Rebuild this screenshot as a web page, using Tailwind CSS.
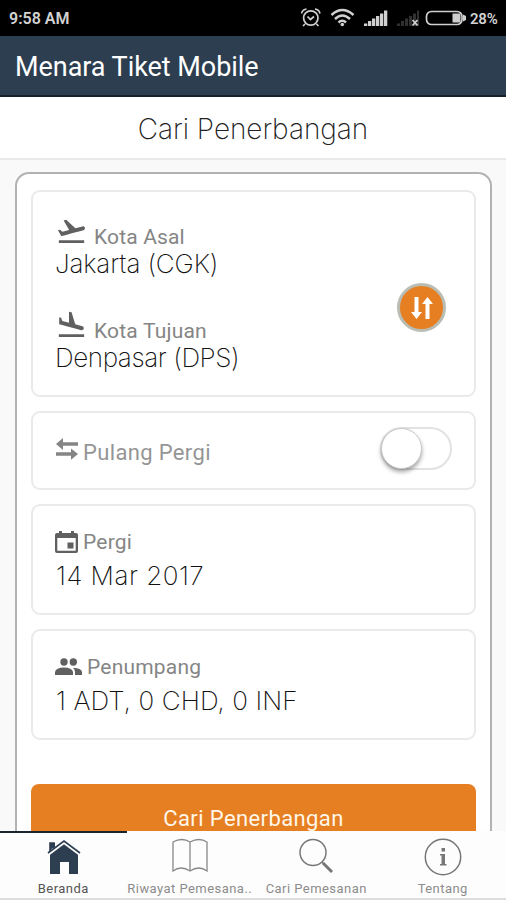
<!DOCTYPE html>
<html lang="id">
<head>
<meta charset="utf-8">
<title>Menara Tiket Mobile</title>
<script src="https://cdn.jsdelivr.net/npm/@tailwindcss/browser@4"></script>
</head>
<body class="bg-[#f9f9f9]">
<div class="flex h-[900px] w-[506px] flex-col overflow-hidden font-['Roboto',sans-serif]">
  <div class="flex h-9 shrink-0 items-center bg-black pl-[9px] pr-2 text-[#d2d2d2]">
    <span class="pt-0.5 text-[16px] font-semibold leading-5">9:58 AM</span>
    <svg class="ml-auto" width="168" height="24" viewBox="0 0 168 24">
      <g fill="none" stroke="#d0d0d0" stroke-width="1.7">
        <circle cx="9.800" cy="12" r="7.200"/>
        <path d="M6.500 10.500l3 3 3.500-3M4 18l-2 2M15.500 18l2 2M.5 7.500q1-4 5-4.500M19 7.500q-1-4-5-4.500"/>
        <path stroke-width="2.500" d="M30.500 9Q41.300-1 52.500 9M34 13Q41.300 6 49 13M37.500 16.500Q41.300 13 45 16.500"/>
        <rect x="125.500" y="5.500" width="35.500" height="13" rx="5"/>
      </g>
      <circle cx="41.300" cy="18.500" r="1.800" fill="#d0d0d0"/>
      <path fill="#d0d0d0" d="M63 17.500h3.300v2.500h-3.300zM67 15h3.300v5h-3.300zM71 12.500h3.300V20h-3.300zM75 10h3.300v10h-3.300zM79 7.500h3.300V20h-3.300zM83 4.500h3.300V20h-3.300zM151.500 7.500h8v9h-8zM162 8.500l3 1.500v4l-3 1.500z"/>
      <path fill="#303030" d="M96 17.500h3v2.500h-3zM100 15h3v5h-3zM104 12.500h3V20h-3zM108 10h3v10h-3zM112 7.500h3V20h-3zM116 4.500h2V20h-2z"/>
      <path d="M111.500 14l5 5.500m0-5.500l-5 5.500" stroke="#d0d0d0" stroke-width="1.800"/>
    </svg>
    <span class="ml-px w-7 pt-0.5 text-[15px] font-semibold leading-5 tracking-[-0.2px]">28%</span>
  </div>
  <header class="flex h-[61px] shrink-0 items-center border-b-2 border-[#16212c] bg-[#2c3e50] pl-[15px] pt-0.5">
    <h1 class="text-[27px] leading-8 tracking-[-0.05px] text-white">Menara Tiket Mobile</h1>
  </header>
  <div class="flex h-[63px] shrink-0 items-center justify-center border-b-2 border-[#e9e9e9] bg-white pt-0.5">
    <h2 class="whitespace-nowrap font-['Inter',sans-serif] text-[28px] font-[250] leading-9 tracking-[-0.05px] text-[#222]">Cari Penerbangan</h2>
  </div>

  <main class="min-h-0 flex-1 overflow-hidden pl-[15px] pr-[14px] pt-3">
    <div class="h-[720px] rounded-[14px] border-2 border-[#b2b2b2] bg-white px-3.5 pt-4">
      <section class="flex h-[207px] items-start justify-between rounded-[9px] border-2 border-[#eaeaea] pl-[22px] pr-7 pt-[31px]">
        <div>
          <div class="flex h-[26px] items-center text-[21px] leading-[26px] tracking-[0.15px] text-[#858585]">
            <svg class="relative -top-[5px] mr-[6px]" width="33" height="32" viewBox="0 0 24 24" fill="#606060"><path d="M2.500 19h19v2h-19zm19.570-9.360c-.210-.800-1.040-1.280-1.840-1.060L14.920 10l-6.900-6.430-1.930.510 4.140 7.170-4.970 1.330-1.970-1.540-1.450.390 2.590 4.490s7.120-1.900 16.570-4.430c.810-.230 1.280-1.050 1.070-1.850z"/></svg><span class="pt-0.5">Kota Asal</span>
          </div>
          <div class="whitespace-nowrap font-['Inter',sans-serif] text-[26px] font-[250] leading-[30px] tracking-[-0.15px] text-[#111]">Jakarta (CGK)</div>
          <div class="mt-[38px] flex h-[26px] items-center text-[21px] leading-[26px] tracking-[0.2px] text-[#858585]">
            <svg class="relative -top-[5px] mr-[6px]" width="33" height="32" viewBox="0 0 24 24" fill="#606060"><path d="M2.500 19h19v2h-19zm7.180-5.730l4.350 1.160 5.310 1.420c.800.210 1.620-.260 1.840-1.060.210-.800-.260-1.620-1.060-1.840l-5.310-1.420-2.760-9.020L10.120 2v8.280L5.150 8.950l-.930-2.320-1.450-.390v5.170l1.600.430 5.310 1.430z"/></svg><span class="pt-0.5">Kota Tujuan</span>
          </div>
          <div class="whitespace-nowrap font-['Inter',sans-serif] text-[26px] font-[250] leading-[30px] tracking-[-0.4px] text-[#111]">Denpasar (DPS)</div>
        </div>
        <button class="mt-[60px] flex size-[49px] items-center justify-center rounded-full border-[3px] border-[#b9bdb3] bg-[#e67e22]">
          <svg width="24" height="26" viewBox="0 0 24 26" fill="#fff"><path d="M4.500 2h4v15h3.500l-5.500 7-5.500-7h3.500zM15.500 24h4V9h3.500l-5.500-7-5.500 7h3.500z"/></svg>
        </button>
      </section>

      <section class="mt-3.5 flex h-[79px] items-center justify-between rounded-[9px] border-2 border-[#eaeaea] pl-[22px] pr-[22px]">
        <div class="flex items-center text-[22px] leading-[26px] tracking-[0.35px] text-[#959595]">
          <svg class="relative -top-[2px] mr-[4px]" width="24" height="24" viewBox="0 0 24 24" fill="#858585"><path d="M1 7l7-6v4.300h15v3.400H8V13zM23 17l-7-5.500v3.800H1v3.400h15v4z"/></svg><span class="pt-1">Pulang Pergi</span>
        </div>
        <div class="relative -top-0.5 h-[43px] w-[72px] rounded-full border-2 border-[#e2e2e2] bg-white">
          <div class="-ml-px -mt-px size-[41px] rounded-full border border-[#c8c8c8] bg-white shadow-[0_3px_4px_rgba(0,0,0,0.35)]"></div>
        </div>
      </section>

      <section class="mt-3.5 h-[111px] rounded-[9px] border-2 border-[#eaeaea] pl-[22px] pt-[23px]">
        <div class="flex h-[26px] items-center text-[21px] leading-[26px] tracking-[0.2px] text-[#858585]">
          <svg class="mr-[5px]" width="23" height="24" viewBox="0 0 23 24" fill="#606060"><path fill-rule="evenodd" d="M4 1h3v2h9V1h3v2h2q2 0 2 2v16q0 2-2 2H2q-2 0-2-2V5q0-2 2-2h2zM2.300 8v12.700h18.400V8zM12.500 12.500h6v6h-6z"/></svg>Pergi
        </div>
        <div class="mt-[6px] pl-px font-['Inter',sans-serif] text-[26px] font-[250] leading-[30px] tracking-[0.5px] text-[#111]">14 Mar 2017</div>
      </section>

      <section class="mt-3.5 h-[111px] rounded-[9px] border-2 border-[#eaeaea] pl-[22px] pt-[23px]">
        <div class="flex h-[26px] items-center text-[21px] leading-[26px] tracking-[0.2px] text-[#858585]">
          <svg class="relative -top-[1px] mr-[5px]" width="27" height="17" viewBox="0 0 27 17" fill="#606060"><circle cx="9" cy="4" r="3.700"/><circle cx="18.300" cy="4" r="3.700"/><path d="M0 17v-3q1-4.500 9-4.500t9 4.500v3zM18 9.700q8.500.300 9 4.300v3h-7v-3q0-2.500-2-4.300z"/></svg>Penumpang
        </div>
        <div class="mt-[6px] whitespace-nowrap pl-px font-['Inter',sans-serif] text-[26px] font-[250] leading-[30px] tracking-[0.1px] text-[#111]">1 ADT, 0 CHD, 0 INF</div>
      </section>

      <button class="mt-11 block h-[70px] w-full rounded-lg bg-[#e67e22] text-center text-[22px] leading-[70px] tracking-[0.4px] text-[#fff6e8]">Cari Penerbangan</button>
    </div>
  </main>

  <nav class="grid h-[69px] shrink-0 grid-cols-4 border-b-2 border-[#dcdcdc] bg-[#fdfdfd] text-[13px] leading-4 tracking-[0.45px] text-[#8c8c8c]">
    <a class="flex flex-col items-center border-t-2 border-[#1b2530] pt-1.5 text-[#555]">
      <svg class="relative left-px" width="34" height="36" viewBox="0 0 34 36"><path fill="#2c3e50" d="M3 4h5v8H3zM3 15L17 4l14 11v20h-9V23h-9v12H3z"/><path fill="none" stroke="#fdfdfd" stroke-width="3.500" d="M1 15L17 3l16 12"/><path fill="none" stroke="#2c3e50" stroke-width="1.600" d="M1 14L17 2l16 12M3 12V4h4v5"/></svg>
      <span class="mt-[6px]">Beranda</span>
    </a>
    <a class="flex flex-col items-center pt-[7px]">
      <svg width="36" height="36" viewBox="0 0 36 36" fill="none" stroke="#888" stroke-width="1.300"><path d="M18 4Q10-1 1 4v29q8-6 17 0 9-6 17 0V4q-8-5-17 0zM18 4v29"/></svg>
      <span class="mt-[7px] whitespace-nowrap">Riwayat Pemesana..</span>
    </a>
    <a class="flex flex-col items-center pt-[7px]">
      <svg width="36" height="36" viewBox="0 0 36 36" fill="none" stroke="#777"><circle cx="15" cy="14.500" r="13" stroke-width="1.500"/><path stroke-width="1.500" d="M24 24l2 2"/><path stroke-width="3" d="M25 25l9 9"/></svg>
      <span class="mt-[7px] whitespace-nowrap">Cari Pemesanan</span>
    </a>
    <a class="flex flex-col items-center pt-[7px]">
      <svg width="38" height="38" viewBox="0 0 38 38"><circle cx="19" cy="19" r="17.700" fill="none" stroke="#777" stroke-width="1.500"/><path fill="#777" d="M17.500 10h3.500v3.500h-3.500zM16 16h5v10h1.500v1.500H16V26h1.500v-8.500H16z"/></svg>
      <span class="mt-[5px]">Tentang</span>
    </a>
  </nav>
</div>
</body>
</html>
